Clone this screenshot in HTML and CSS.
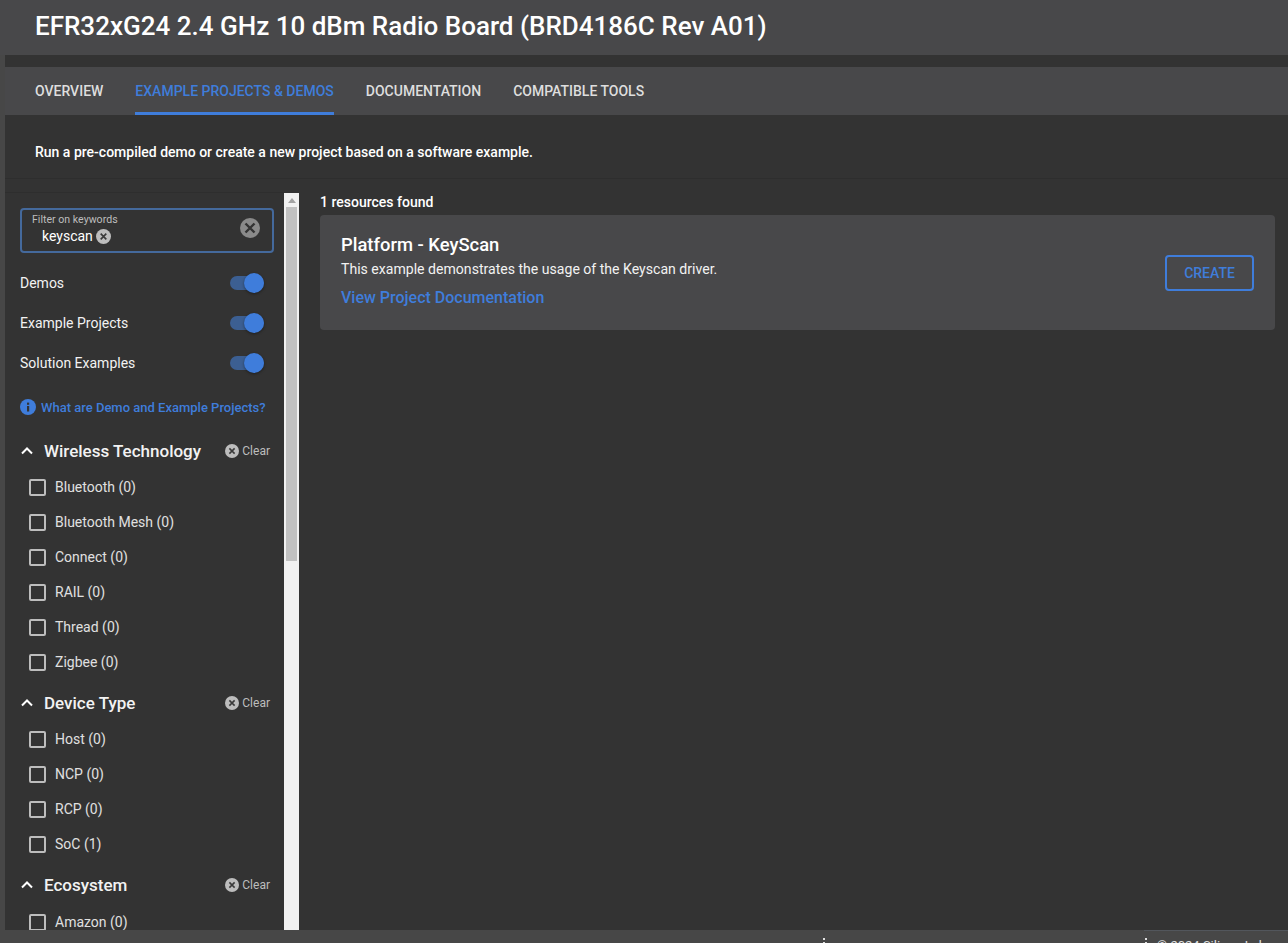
FILE: index.html
```html
<!DOCTYPE html>
<html lang="en">
<head>
    <meta charset="UTF-8">
    <title>EFR32xG24 Radio Board</title>
    <link rel="stylesheet" href="styles.css">
</head>
<body>
    <svg class="defs" width="0" height="0">
        <symbol id="clear" viewBox="0 0 24 24">
            <circle cx="12" cy="12" r="12" fill="#bdbdbd"/>
            <path d="M7.5 7.5l9 9M16.5 7.5l-9 9" stroke="#3a3a3a" stroke-width="2.6" fill="none"/>
        </symbol>
        <symbol id="chevron" viewBox="0 0 12 8">
            <path d="M1 6.5l5-5 5 5" stroke="#fff" stroke-width="2" fill="none"/>
        </symbol>
    </svg>

    <div class="page">
        <header class="title-bar">
            <h1>EFR32xG24 2.4 GHz 10 dBm Radio Board (BRD4186C Rev A01)</h1>
        </header>
        <div class="gap-strip"></div>
        <nav class="tabs">
            <a class="tab">OVERVIEW</a>
            <a class="tab active">EXAMPLE PROJECTS &amp; DEMOS</a>
            <a class="tab">DOCUMENTATION</a>
            <a class="tab">COMPATIBLE TOOLS</a>
        </nav>
        <div class="intro">Run a pre-compiled demo or create a new project based on a software example.</div>

        <div class="content">
            <aside class="sidebar">
                <div class="search">
                    <div class="search-text">
                        <label>Filter on keywords</label>
                        <div class="chip">keyscan <svg class="chip-x"><use href="#clear"/></svg></div>
                    </div>
                    <svg class="search-x" viewBox="0 0 24 24">
                        <circle cx="12" cy="12" r="10" fill="#8a8a8a"/>
                        <path d="M7.5 7.5l9 9M16.5 7.5l-9 9" stroke="#333" stroke-width="2.4" fill="none"/>
                    </svg>
                </div>

                <div class="toggle-row"><span>Demos</span><span class="toggle"></span></div>
                <div class="toggle-row"><span>Example Projects</span><span class="toggle"></span></div>
                <div class="toggle-row"><span>Solution Examples</span><span class="toggle"></span></div>

                <a class="help">
                    <svg viewBox="0 0 16 16" width="16" height="16">
                        <circle cx="8" cy="8" r="8" fill="#3f7ddb"/>
                        <rect x="7" y="7" width="2.2" height="5.5" fill="#333"/>
                        <rect x="7" y="3.6" width="2.2" height="2.2" fill="#333"/>
                    </svg>
                    What are Demo and Example Projects?
                </a>

                <section class="group">
                    <div class="group-head">
                        <svg class="chevron"><use href="#chevron"/></svg>
                        <h3>Wireless Technology</h3>
                        <span class="clear"><svg><use href="#clear"/></svg>Clear</span>
                    </div>
                    <div class="check"><i></i>Bluetooth (0)</div>
                    <div class="check"><i></i>Bluetooth Mesh (0)</div>
                    <div class="check"><i></i>Connect (0)</div>
                    <div class="check"><i></i>RAIL (0)</div>
                    <div class="check"><i></i>Thread (0)</div>
                    <div class="check"><i></i>Zigbee (0)</div>
                </section>

                <section class="group">
                    <div class="group-head">
                        <svg class="chevron"><use href="#chevron"/></svg>
                        <h3>Device Type</h3>
                        <span class="clear"><svg><use href="#clear"/></svg>Clear</span>
                    </div>
                    <div class="check"><i></i>Host (0)</div>
                    <div class="check"><i></i>NCP (0)</div>
                    <div class="check"><i></i>RCP (0)</div>
                    <div class="check"><i></i>SoC (1)</div>
                </section>

                <section class="group last">
                    <div class="group-head">
                        <svg class="chevron"><use href="#chevron"/></svg>
                        <h3>Ecosystem</h3>
                        <span class="clear"><svg><use href="#clear"/></svg>Clear</span>
                    </div>
                    <div class="check"><i></i>Amazon (0)</div>
                </section>
            </aside>

            <div class="scrollbar">
                <div class="scroll-arrow"></div>
                <div class="scroll-thumb"></div>
            </div>

            <main class="results">
                <div class="count">1 resources found</div>
                <div class="card">
                    <div class="card-text">
                        <h2>Platform - KeyScan</h2>
                        <p>This example demonstrates the usage of the Keyscan driver.</p>
                        <a>View Project Documentation</a>
                    </div>
                    <button class="create">CREATE</button>
                </div>
            </main>
        </div>

        <footer class="footer">
            <span class="dots first"></span>
            <span class="dots second"></span>
            <span class="footer-line"></span>
            <span class="copy">© 2024 Silicon Labs</span>
        </footer>
    </div>
</body>
</html>
```

FILE: styles.css
```css
* {
    box-sizing: border-box;
}

html, body {
    margin: 0;
    padding: 0;
    height: 943px;
    overflow: hidden;
}

body {
    font-family: Roboto, "Liberation Sans", sans-serif;
    background-color: #474747;
    color: #fff;
}

.defs {
    display: block;
    height: 0;
}

.page {
    height: 943px;
    padding-left: 5px;
    display: flex;
    flex-direction: column;
    overflow: hidden;
}

.title-bar {
    height: 55px;
    margin-left: -5px;
    padding: 8px 0 0 35px;
    background-color: #48484a;
}

h1 {
    margin: 0;
    font-size: 26px;
    line-height: 36px;
    font-weight: 500;
}

.gap-strip {
    height: 12px;
    background-color: #333;
}

.tabs {
    height: 48px;
    padding-left: 14px;
    display: flex;
    background-color: #48484a;
}

.tab {
    margin: 0 16px;
    padding-top: 15px;
    font-size: 14px;
    line-height: 18px;
    font-weight: 500;
    color: #dedede;
}

.tab.active {
    color: #3f7ddb;
    border-bottom: 3px solid #3f7ddb;
}

.intro {
    height: 64px;
    padding: 28px 0 0 30px;
    font-size: 14px;
    line-height: 18px;
    font-weight: 500;
    background-color: #333;
    border-bottom: 1px solid #2e2e2e;
}

.content {
    flex: 1;
    min-height: 0;
    display: flex;
    padding-top: 13px;
    background-color: #333;
}

.sidebar {
    width: 279px;
    padding: 15px 10px 0 15px;
    border-top: 1px solid #2e2e2e;
    overflow: hidden;
}

.search {
    height: 45px;
    margin-bottom: 10px;
    padding: 3px 10px 0 11px;
    display: flex;
    justify-content: space-between;
    border: 2px solid #44699c;
    border-radius: 4px;
}

.search label {
    display: block;
    margin-left: -1px;
    font-size: 10.6px;
    line-height: 14px;
    color: #bdbdbd;
}

.chip {
    padding-left: 9px;
    display: flex;
    align-items: center;
    font-size: 14px;
    line-height: 18px;
}

.chip-x {
    width: 15px;
    height: 15px;
    margin-left: 3px;
}

.search-x {
    width: 24px;
    height: 24px;
    margin-top: 3px;
}

.toggle-row {
    height: 40px;
    display: flex;
    align-items: center;
    justify-content: space-between;
    padding-right: 10px;
    font-size: 14px;
    color: #f2f2f2;
}

.toggle {
    position: relative;
    width: 34px;
    height: 14px;
    border-radius: 7px;
    background-color: #3c5f92;
}

.toggle::after {
    content: "";
    position: absolute;
    right: 0;
    top: -3px;
    width: 20px;
    height: 20px;
    border-radius: 50%;
    background-color: #3f7ddb;
    box-shadow: 0 1px 3px rgba(0, 0, 0, 0.4);
}

.help {
    height: 16px;
    margin-top: 16px;
    display: flex;
    align-items: center;
    gap: 5px;
    font-size: 13px;
    font-weight: 500;
    color: #3f7ddb;
}

.group-head {
    height: 42px;
    padding-top: 6px;
    display: flex;
    align-items: center;
}

.help + .group .group-head {
    height: 54px;
    padding-top: 18px;
}

.group.last .group-head {
    height: 43px;
    padding-top: 5px;
}

.chevron {
    width: 12px;
    height: 8px;
    margin-left: 1px;
}

h3 {
    flex: 1;
    margin: 0 0 0 11px;
    font-size: 17px;
    font-weight: 500;
    color: #f2f2f2;
}

.clear {
    display: flex;
    align-items: center;
    gap: 3px;
    padding-right: 4px;
    font-size: 12px;
    color: #bdbdbd;
}

.clear svg {
    width: 14px;
    height: 14px;
}

.check {
    height: 35px;
    padding-left: 9px;
    display: flex;
    align-items: center;
    font-size: 14px;
    color: #e0e0e0;
}

.check i {
    width: 17px;
    height: 17px;
    margin: 2px 9px 0 0;
    border: 2px solid #bdbdbd;
    border-radius: 2px;
}

.scrollbar {
    width: 15px;
    margin-top: 1px;
    background-color: #f1f1f1;
}

.scroll-arrow {
    width: 0;
    height: 0;
    margin: 5px auto 4px;
    border: 4px solid transparent;
    border-top: 0;
    border-bottom: 5px solid #a3a3a3;
}

.scroll-thumb {
    height: 354px;
    margin: 0 2px;
    background-color: #c1c1c1;
}

.results {
    flex: 1;
    padding: 1px 13px 0 21px;
}

.count {
    font-size: 14px;
    line-height: 18px;
    font-weight: 500;
    margin-bottom: 4px;
}

.card {
    height: 115px;
    padding: 18px 21px 0 21px;
    display: flex;
    justify-content: space-between;
    background-color: #48484a;
    border-radius: 4px;
}

.card h2 {
    margin: 0;
    font-size: 18.4px;
    line-height: 24px;
    font-weight: 500;
}

.card p {
    margin: 3px 0 9px;
    font-size: 14.08px;
    line-height: 18px;
    color: #f2f2f2;
}

.card a {
    font-size: 16px;
    line-height: 22px;
    font-weight: 500;
    color: #3f7ddb;
}

.create {
    width: 89px;
    height: 36px;
    margin-top: 22px;
    font-family: inherit;
    font-size: 14px;
    font-weight: 500;
    color: #3f7ddb;
    background: none;
    border: 2px solid #3f7ddb;
    border-radius: 4px;
}

.footer {
    position: relative;
    height: 13px;
    margin-left: -5px;
    flex: none;
    background-color: #474747;
}

.footer-line {
    position: absolute;
    left: 1144px;
    right: 0;
    top: 0;
    height: 1px;
    background-color: #52565c;
}

.dots {
    position: absolute;
    top: 8px;
    width: 2px;
    height: 2px;
    background-color: #e0e0e0;
    box-shadow: 0 4px 0 #e0e0e0;
}

.dots.first {
    left: 823px;
}

.dots.second {
    left: 1145px;
}

.copy {
    position: absolute;
    left: 1157px;
    top: 8px;
    font-size: 13px;
    line-height: 16px;
    white-space: nowrap;
    color: #e0e0e0;
}
```
